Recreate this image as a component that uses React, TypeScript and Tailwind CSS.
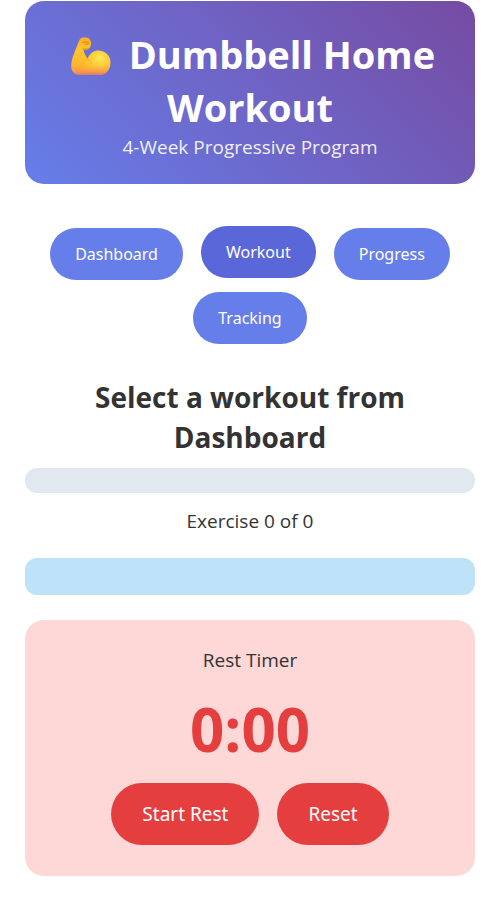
import { useEffect, useState } from "react";

const tabs = ["Dashboard", "Workout", "Progress", "Tracking"];

function FlexedArm() {
  return (
    <svg
      className="mr-2 ml-1.5 inline-block h-[38px] w-10 align-[-6px]"
      viewBox="0 0 40 38"
      role="img"
      aria-label="Flexed arm"
    >
      <defs>
        <linearGradient id="arm" x1="0" y1="0" x2="0" y2="1">
          <stop offset="0" stopColor="#f9b024" />
          <stop offset="0.35" stopColor="#ffc62c" />
          <stop offset="0.72" stopColor="#feb62f" />
          <stop offset="1" stopColor="#feb038" />
        </linearGradient>
        <radialGradient id="bicep" cx="0.65" cy="0.3" r="0.72">
          <stop offset="0" stopColor="#ffe654" />
          <stop offset="0.5" stopColor="#ffca36" />
          <stop offset="1" stopColor="#fdb52e" />
        </radialGradient>
        <linearGradient id="shade" x1="0" y1="0" x2="0" y2="1">
          <stop offset="0.45" stopColor="#f98f4a" stopOpacity="0" />
          <stop offset="0.8" stopColor="#f08a55" stopOpacity="0.6" />
          <stop offset="1" stopColor="#d8757a" />
        </linearGradient>
      </defs>
      <path
        fill="url(#arm)"
        d="M8 4C9 1 12 0 15 0.4C19 1 20.5 4 20 7.5C19.6 11 17.5 12.4 14 12.3L12.5 12.6C13 16 14.5 19 16.7 21.5L30 36C27 37.6 20 38 10 38C3 38 0 34 0.2 28C0.5 21 5 12 8 4Z"
      />
      <path
        fill="url(#bicep)"
        d="M16.7 21.5C19 16 23 13.4 28 13.6C35 14 39.8 19.5 39.5 26C39.2 33.5 34.5 38 28 38H10C9 34 13 28 16.7 21.5Z"
      />
      <path
        fill="url(#shade)"
        d="M0.2 28C3 23 9 20 16.7 21.5C24 19 34 20 39.5 26C39.2 33.5 34.5 38 28 38H10C3 38 0 34 0.2 28Z"
      />
      <path
        fill="none"
        stroke="#e79418"
        strokeWidth="1.5"
        strokeLinecap="round"
        d="M12 5.5C14 4.3 17 4.4 17.6 5.7C17.6 7.2 16 7.5 14.7 7.1M12 12C13.5 12.6 15 12.4 16.5 12"
      />
      <path fill="none" stroke="#f0a022" strokeOpacity="0.6" d="M16.7 21.5L21 27" />
    </svg>
  );
}

export default function App() {
  const [active, setActive] = useState("Workout");
  const [seconds, setSeconds] = useState(0);
  const [running, setRunning] = useState(false);

  useEffect(() => {
    if (!running) return;
    const id = setInterval(() => setSeconds((s) => s + 1), 1000);
    return () => clearInterval(id);
  }, [running]);

  const time = `${Math.floor(seconds / 60)}:${String(seconds % 60).padStart(2, "0")}`;

  return (
    <div className="bg-white pt-px pr-[22px] pb-6 pl-[25px] text-center font-['Open_Sans','Noto_Sans',sans-serif] text-[19px] leading-[27px] text-[#333333]">
      <header className="rounded-[19px] bg-[linear-gradient(45deg,#667eea,#764ba2)] px-[25px] pt-[27px] pb-[23px] text-white">
        <h1 className="text-[38px] leading-[53px] font-bold">
          <FlexedArm /> Dumbbell Home Workout
        </h1>
        <p className="opacity-90">4-Week Progressive Program</p>
      </header>

      <nav className="mt-11 flex flex-wrap justify-center gap-x-[18px] gap-y-3 font-['Noto_Sans',sans-serif]">
        {tabs.map((tab) => (
          <button
            key={tab}
            type="button"
            onClick={() => setActive(tab)}
            className={`h-[52px] rounded-[26px] px-[25px] text-[16px] text-white ${
              active === tab ? "-translate-y-0.5 bg-[#5a67d8]" : "bg-[#667eea]"
            }`}
          >
            {tab}
          </button>
        ))}
      </nav>

      <main>
        <h2 className="mt-[33px] text-[28px] leading-10 font-bold">Select a workout from Dashboard</h2>
        <div role="progressbar" aria-label="Workout progress" aria-valuenow={0} className="mt-[11px] h-[25px] rounded-[12px] bg-[#e2e8f0]" />
        <p className="mt-[15px]">Exercise 0 of 0</p>
        <div className="mt-[23px] h-[37px] rounded-[12px] bg-[#bee3f8]" />

        <section className="mt-[25px] rounded-[19px] bg-[#fed7d7] px-[25px] pt-[27px] pb-[31px]">
          <h3>Rest Timer</h3>
          <div role="timer" className="mt-[15px] text-[60px] leading-[80px] font-bold text-[#e53e3e]">
            {time}
          </div>
          <div className="mt-3.5 flex flex-wrap justify-center gap-[18px] font-['Noto_Sans',sans-serif] text-white">
            <button type="button" onClick={() => setRunning(true)} className="h-[62px] rounded-[31px] bg-[#e53e3e] px-[31px]">
              Start Rest
            </button>
            <button
              type="button"
              onClick={() => {
                setRunning(false);
                setSeconds(0);
              }}
              className="h-[62px] rounded-[31px] bg-[#e53e3e] px-[31px]"
            >
              Reset
            </button>
          </div>
        </section>
      </main>
    </div>
  );
}
